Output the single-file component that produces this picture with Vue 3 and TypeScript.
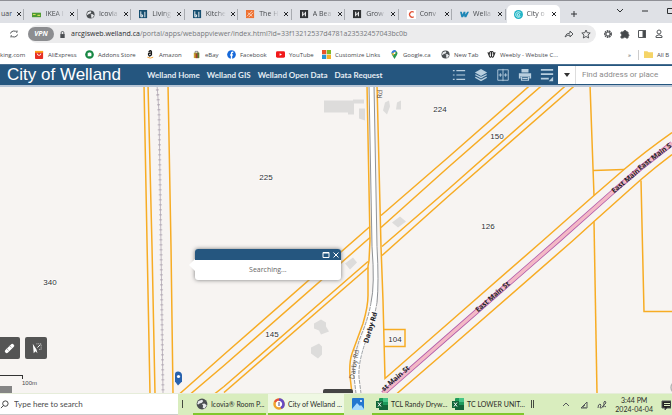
<script setup lang="ts">
interface Tab { title: string; icon: string; active?: boolean }
interface Bookmark { label: string; icon: string; width: number }
interface Label { text: string; x: number; y: number }

const tabs: Tab[] = [
  { title: 'uar', icon: 'none' },
  { title: 'IKEA I', icon: 'ikea' },
  { title: 'Icovia', icon: 'globe' },
  { title: 'Living', icon: 'bi' },
  { title: 'Kitche', icon: 'bi' },
  { title: 'The H', icon: 'depot' },
  { title: 'A Bea', icon: 'houzz' },
  { title: 'Grow', icon: 'houzz' },
  { title: 'Conv', icon: 'c' },
  { title: 'Wella', icon: 'w' },
  { title: 'City o', icon: 'city', active: true },
]

const bookmarks: Bookmark[] = [
  { label: 'king.com', icon: 'none', width: 35 },
  { label: 'AliExpress', icon: 'ali', width: 50 },
  { label: 'Addons Store', icon: 'addons', width: 61 },
  { label: 'Amazon', icon: 'amazon', width: 46 },
  { label: 'eBay', icon: 'ebay', width: 35 },
  { label: 'Facebook', icon: 'facebook', width: 49 },
  { label: 'YouTube', icon: 'youtube', width: 46 },
  { label: 'Customize Links', icon: 'windows', width: 68 },
  { label: 'Google.ca', icon: 'pin', width: 51 },
  { label: 'New Tab', icon: 'globe', width: 46 },
  { label: 'Weebly - Website C...', icon: 'weebly', width: 84 },
]

const links = ['Welland Home', 'Welland GIS', 'Welland Open Data', 'Data Request']
const tools = ['Legend', 'Layers', 'Swipe', 'Print', 'More']

const parcels: Label[] = [
  { text: '224', x: 440, y: 111 },
  { text: '225', x: 266, y: 179 },
  { text: '150', x: 497, y: 138 },
  { text: '126', x: 488, y: 228 },
  { text: '340', x: 50, y: 284 },
  { text: '145', x: 272, y: 336 },
  { text: '104', x: 395, y: 341 },
]

const parcelLines: string[] = [
  'M144 84L147 240L150 393',
  'M148 84L152 246L155 393',
  'M168 84L171 246L173 393',
  'M531 84L448 157L381 215',
  'M370 226L224 354L180 393',
  'M543 84L448 167L381 227',
  'M370 237L224 365L191 393',
  'M567 84L448 189L382 246',
  'M368 261L224 386L215 393',
  'M576 84L448 196L382 255',
  'M368 267L224 392',
  'M367 84L370 240L369 260L368 266L368 295Q368 306 363 323L352 353Q349 362 350 376L352 393',
  'M377 84L381 246L383 300L385 378L448 323L543 240L594 195L624 169Q645 151 672 132',
  'M397 393L448 349L573 240L594 221L641 179Q656 166 672 154',
  'M590 84L594 195M593 170L624 169',
  'M594 221L597 393',
  'M641 180L644 311H672',
  'M384 329H405V346H384',
]
</script>

<template>
  <div class="screen">
    <svg class="defs" aria-hidden="true">
      <symbol id="i-none" viewBox="0 0 10 10" />
      <symbol id="i-ikea" viewBox="0 0 10 10"><path fill="#4d9a32" d="M0 3h10v5H0z" /><path stroke="#d3df59" stroke-width="1.3" d="M1 5h3M6 6h3" /></symbol>
      <symbol id="i-globe" viewBox="0 0 10 10"><circle cx="5" cy="5" r="4.5" fill="#4b4f52" /><path fill="#e8eaed" d="M2 2.500l3-1 1 1-1 1.500-2 .5-1 1-1-.5zM5 5l2-.5L9 6 7 9 5.500 8 6 6.500z" /></symbol>
      <symbol id="i-bi" viewBox="0 0 10 10"><path fill="#174f70" d="M0 0h9v9H0z" /><path fill="none" stroke="#fff" d="M2 1.500v6h2v-2H2M6.500 2v6" /></symbol>
      <symbol id="i-depot" viewBox="0 0 10 10"><path fill="#ee7030" d="M0 0h9v9H0z" /><path stroke="#fff" stroke-width=".7" d="M1 7l6-6M3 8l5-5M2 3l5 4" /></symbol>
      <symbol id="i-houzz" viewBox="0 0 10 10"><path fill="#303235" d="M0 0h9v9H0z" /><path fill="none" stroke="#fff" stroke-width="1.100" d="M3 7V2M6 2v5M3 5l3-1" /></symbol>
      <symbol id="i-c" viewBox="0 0 10 10"><path fill="#fff" d="M0 0h10v10H0z" /><path fill="none" stroke="#e15337" stroke-width="1.400" d="M7.500 2.500a3 3 0 1 0 0 5" /></symbol>
      <symbol id="i-w" viewBox="0 0 10 10"><path fill="#1d86b6" d="M0 2h2l1 3 1-3h2v3l2-3h2L7 8H5L4.500 6 3.500 8h-2z" /></symbol>
      <symbol id="i-city" viewBox="0 0 10 10"><circle cx="5" cy="5" r="5" fill="#20b3c6" /><path fill="none" stroke="#d9f8f7" d="M7.500 3.500a3 3 0 1 0 0 3M4 5c0-2 3-1 2 1S3 6 4 4" /></symbol>
      <symbol id="i-ali" viewBox="0 0 10 10"><rect y="1" width="9" height="9" rx="1" fill="#e62e24" /><path fill="#ffa21b" d="M0 1h9v2H0z" /><path fill="none" stroke="#fff" d="M2.500 4a2 2 0 0 0 4 0" /></symbol>
      <symbol id="i-addons" viewBox="0 0 10 10"><circle cx="5" cy="5" r="4.800" fill="#178743" /><path fill="#fff" d="M3 3h1.500a1 1 0 0 1 1.500 0h1v1.500a1 1 0 0 1 0 1.500v1H3z" /></symbol>
      <symbol id="i-amazon" viewBox="0 0 10 10"><path fill="none" stroke="#171717" stroke-width="1.500" d="M3 2.500Q5-.5 6 2v4M6 3.500Q2 3 3 5.500T6 5" /><path fill="none" stroke="#f39b22" d="M1.500 8Q5 10 8 8" /></symbol>
      <symbol id="i-ebay" viewBox="0 0 10 10"><path fill="#c8a22a" d="M2 3h6v6H2z" /><path fill="#5b7d33" d="M5 3h3v6H5z" /><path fill="#a43b30" d="M4 4h2v5H4z" /><path fill="none" stroke="#555" stroke-width=".7" d="M3.500 4V1.500h3V4" /></symbol>
      <symbol id="i-facebook" viewBox="0 0 10 10"><circle cx="5" cy="5" r="4.800" fill="#1769d9" /><path fill="none" stroke="#fff" stroke-width="1.500" d="M7 2.500H6Q5 2.500 5 4v6M3.500 5.500h3" /></symbol>
      <symbol id="i-youtube" viewBox="0 0 10 10"><rect y="1.500" width="10" height="7" rx="1.500" fill="#f1191a" /><path fill="#fff" d="M4 3.500v3L6.700 5z" /></symbol>
      <symbol id="i-windows" viewBox="0 0 10 10"><path fill="#e8532b" d="M0 0h4.700v4.700H0z" /><path fill="#7db928" d="M5.300 0H10v4.700H5.300z" /><path fill="#2796d4" d="M0 5.300h4.700V10H0z" /><path fill="#f3b329" d="M5.300 5.300H10V10H5.300z" /></symbol>
      <symbol id="i-pin" viewBox="0 0 10 10"><path fill="#2c9a54" d="M5 10L2.300 5.500A3.200 3.200 0 1 1 7.700 5.500z" /><path fill="#3b7de0" d="M2 4a3 3 0 0 1 5-3L4 4z" /><path fill="#efb83a" d="M2 4l1.500 2.500L7 2z" /><circle cx="5" cy="3.500" r="1" fill="#fff" /></symbol>
      <symbol id="i-weebly" viewBox="0 0 10 10"><path fill="none" stroke="#292929" stroke-width="1.200" d="M1 2.500l2 5Q4 9 5 6.500V3Q5 1 3.500 2M5 3Q5 1 6.500 2M5 6.500Q6 9 7 7.500l2-5M3 2v3M7 2v3" /></symbol>
      <symbol id="i-excel" viewBox="0 0 12 12"><rect x="3" width="9" height="12" rx="1" fill="#1d9a5a" /><path fill="#47c488" d="M7 0h5v4H7z" /><path fill="#13663a" d="M3 7h9v5H3zM0 3h7v7H0z" /><path stroke="#fff" d="M2 4.500l3 4M5 4.500l-3 4" /></symbol>
    </svg>

    <nav class="tab-strip" aria-label="Browser tabs">
      <div class="tabs">
        <div v-for="tab in tabs" :key="tab.title" class="tab" :class="{ active: tab.active, partial: tab.icon === 'none' }">
          <svg class="favicon" viewBox="0 0 10 10"><use :href="'#i-' + tab.icon" /></svg>
          <span class="tab-title">{{ tab.title }}</span>
          <button class="tab-close" :aria-label="'Close ' + tab.title"><svg viewBox="0 0 6 6"><path d="M1 1l4 4M5 1L1 5" /></svg></button>
        </div>
      </div>
      <button class="new-tab" aria-label="New tab"><svg viewBox="0 0 8 8"><path d="M4 1v6M1 4h6" /></svg></button>
      <div class="window-controls">
        <button aria-label="Search tabs"><svg viewBox="0 0 8 8"><path d="M1 2l3 3 3-3" /></svg></button>
        <button aria-label="Minimize"><svg viewBox="0 0 8 8"><path d="M1 4h6" /></svg></button>
        <button aria-label="Maximize"><svg viewBox="0 0 8 8"><path d="M1.500 1.500h6v5h-6z" /></svg></button>
      </div>
    </nav>

    <div class="address-row">
      <button class="reload" aria-label="Reload"><svg viewBox="0 0 10 10"><path d="M1.500 4.500a3.500 3 0 0 1 6.500-1V1.500M8.500 5.500a3.500 3 0 0 1-6.500 1v2" /></svg></button>
      <div class="omnibox">
        <span class="vpn">VPN</span>
        <svg class="lock" viewBox="0 0 8 8"><path fill="#4b4e52" d="M1.500 3.500h5V8h-5z" /><path fill="none" stroke="#4b4e52" d="M2.500 4V2a1.500 1.500 0 0 1 3 0v2" /></svg>
        <p class="url"><b>arcgisweb.welland.ca</b>/portal/apps/webappviewer/index.html?id=33f13212537d4781a23532457043bc0b</p>
        <button aria-label="Share"><svg viewBox="0 0 10 10"><path d="M1 8Q2 4 6 4V2l3 3-3 3V6Q3 6 1 8z" /></svg></button>
        <button aria-label="Bookmark"><svg viewBox="0 0 10 10"><path d="M5 1l1.200 2.700 3 .3L7 6l.7 3L5 7.500 2.300 9 3 6 .8 4l3-.3z" /></svg></button>
      </div>
      <div class="extensions">
        <button aria-label="Settings"><svg viewBox="0 0 10 10"><circle cx="5" cy="5" r="3" stroke-width="2" stroke-dasharray="1.500 .6" /><circle cx="5" cy="5" r="2" /></svg></button>
        <button aria-label="Extensions"><svg viewBox="0 0 10 10"><path fill="#45484b" d="M1 3h2.500a1.500 1.500 0 0 1 3 0H8v2a1.300 1.300 0 0 1 0 2.500V9H6a1.300 1.300 0 0 0-2.500 0H1V7a1 1 0 0 0 0-2z" /></svg></button>
        <button aria-label="Side panel"><svg viewBox="0 0 10 10"><path d="M1.500 1.500h7v7h-7z" /><path fill="#45484b" d="M6 1.500h2.500v7H6z" /></svg></button>
        <button aria-label="Profile"><svg viewBox="0 0 10 10"><circle cx="5" cy="3" r="2" /><path d="M2 8.500V7Q5 4.500 8 7v1.500z" /></svg></button>
      </div>
    </div>

    <nav class="bookmarks" aria-label="Bookmarks">
      <a v-for="b in bookmarks" :key="b.label" href="#" :style="{ width: b.width + 'px' }"><svg v-if="b.icon !== 'none'" viewBox="0 0 10 10"><use :href="'#i-' + b.icon" /></svg>{{ b.label }}</a>
      <div class="bookmarks-end">
        <button aria-label="More bookmarks">»</button>
        <a class="all" href="#"><svg viewBox="0 0 8 8"><path fill="#f5d467" d="M0 1h3l1 1h4v5H0z" /></svg>All B</a>
      </div>
    </nav>

    <header class="app-header">
      <h1>City of Welland</h1>
      <nav class="app-links" aria-label="City sites"><a v-for="l in links" :key="l" href="#">{{ l }}</a></nav>
      <div class="tools">
        <button v-for="tool in tools" :key="tool" :aria-label="tool">
          <svg viewBox="0 0 16 16">
            <path v-if="tool === 'Legend'" fill="none" stroke="currentColor" stroke-width="1.400" d="M1 3h2M5 3h10M1 8h2M5 8h10M1 13h2M5 13h10" />
            <g v-else-if="tool === 'Layers'" fill="currentColor"><path d="M8 1l7 4-7 4-7-4z" /><path d="M2 7l6 3 6-3 1 1-7 4-7-4zM2 10l6 3 6-3 1 1-7 4-7-4z" /></g>
            <g v-else-if="tool === 'Swipe'" fill="none" stroke="currentColor"><path d="M2 2h12v12H2zM8 1v14M3 8h4M9 8h4M5 6v4M11 6v4" /></g>
            <g v-else-if="tool === 'Print'"><path fill="currentColor" d="M4 1h8v4H4zM1 6h14v6h-2V9H3v3H1z" /><path fill="none" stroke="currentColor" stroke-width="1.300" d="M4 10h8v4H4zM5 12h6" /></g>
            <g v-else><path stroke="currentColor" stroke-width="2" d="M1 2h14M1 7h14M1 12h9" /><path fill="currentColor" d="M15 10v5h-5z" /></g>
          </svg>
        </button>
      </div>
      <form class="search" @submit.prevent>
        <button type="button" aria-label="Search source"><svg viewBox="0 0 8 6"><path fill="#333" d="M1 1h6L4 5z" /></svg></button>
        <input type="text" aria-label="Find address or place" placeholder="Find address or place">
      </form>
    </header>

    <main class="map">
      <svg class="canvas" viewBox="0 84 672 309" preserveAspectRatio="xMidYMid slice" role="img" aria-label="Parcel map">
        <g fill="#dddcdb">
          <path d="M324 100h29v-1l11 0v4h-10v11h-6v-2h-24zM359 108h6v12l-6-2zM385 102l4-2 1 6-3 8-4-4zM397 102l4-2v9h-5zM392 222l8-6 6 5-8 6zM345 263l8-6 4 5-7 7zM402 84h9v2h-9zM314 323l7-4 5 3v4l3 5-8 3-2-4-5-2zM311 347l8-4 3 3v8l-4 4-7-5z" />
        </g>
        <g fill="none">
          <path stroke="#fff" stroke-width="5" d="M371 84L375 246Q377 285 374 302T364 340Q355 367 357 380L359 393" />
          <path stroke="#73777c" stroke-width=".8" d="M369 84L372 246Q375 285 371 302" />
          <path stroke="#73777c" stroke-width=".8" d="M374 84L377 246Q379 282 377 302" />
          <path stroke="#73777c" stroke-width=".7" stroke-dasharray="4 1" d="M371 302Q369 316 361 335Q352 359 354 376L356 393M377 302Q374 320 366 340Q358 362 359 377L361 393" />
          <path stroke="#a79dab" stroke-width=".7" d="M157 84L159 112L161 246L163 393" />
          <path stroke="#a79dab" stroke-width="3" stroke-dasharray=".8 4.200" d="M157 84L159 112L161 246L163 393" />
          <path stroke="#b25ba8" stroke-width="5" d="M383 393L448 336L558 240L611 193L640 168L672 143" />
          <path stroke="#f3b8c6" stroke-width="3.500" d="M383 393L448 336L558 240L611 193L640 168L672 143" />
          <g stroke="#f7ac24" stroke-width="1.500"><path v-for="line in parcelLines" :key="line" :d="line" /></g>
          <circle cx="677" cy="387" r="6" stroke="#b5b5b5" stroke-width="1.500" />
        </g>
        <g class="parcel-labels"><text v-for="p in parcels" :key="p.text" :x="p.x" :y="p.y">{{ p.text }}</text></g>
        <g class="street-labels">
          <text transform="translate(478 312) rotate(-41)">East Main St</text>
          <text transform="translate(614 193) rotate(-40)">East Main</text>
          <text transform="translate(640 170) rotate(-37)">East Main S</text>
          <text transform="translate(384 391) rotate(-41)">st Main St</text>
          <text transform="translate(368 343) rotate(-73)">Darby Rd</text>
          <text class="light" transform="translate(354 379) rotate(-80)">Darby Rd</text>
          <text class="light" transform="translate(382 98) rotate(-88)">Rd</text>
        </g>
        <path fill="#2862ae" d="M178 385l-3-4v-7q0-3 3-3t4 3v7z" /><circle cx="178.500" cy="376" r="1.600" fill="#fff" />
      </svg>

      <section class="popup" aria-label="Search status">
        <div class="popup-bar">
          <button aria-label="Maximize popup"><svg viewBox="0 0 8 8"><path d="M1 1.500h6v5H1zM1 2h6" /></svg></button>
          <button aria-label="Close popup"><svg viewBox="0 0 8 8"><path d="M1.500 1.500l5 5M6.500 1.500l-5 5" /></svg></button>
        </div>
        <p>Searching...</p>
      </section>

      <div class="map-tools">
        <button aria-label="Measure"><svg viewBox="0 0 14 14"><path stroke="#fff" stroke-width="4" stroke-linecap="round" d="M4 10l6-6" /><path stroke="#999" d="M4 7l2 2M7 4l2 2" /></svg></button>
        <button aria-label="Select"><svg viewBox="0 0 14 14"><path fill="#fff" d="M3 2l4 6 1 4-2-2-2 2z" /><path fill="none" stroke="#ddd" stroke-dasharray="1 1" d="M7 2h5v6H9" /><path stroke="#fff" d="M8 6l3-3" /></svg></button>
      </div>
      <div class="scale"><span class="bar"></span><span class="scale-text">100m</span></div>
      <div class="coords"></div>
      <button class="drawer" aria-label="Open attribute table"></button>
    </main>

    <footer class="taskbar">
      <label class="task-search">
        <svg viewBox="0 0 10 10"><circle cx="6" cy="4" r="3" /><path d="M4 6L1 9" /></svg>
        <input type="text" aria-label="Type here to search" placeholder="Type here to search">
      </label>
      <span class="grip first"></span>
      <button class="task icovia"><svg viewBox="0 0 10 10"><use href="#i-globe" /></svg><span>Icovia® Room P...</span></button>
      <button class="task city"><svg viewBox="0 0 12 12"><circle cx="6" cy="6" r="4.500" fill="#fff" stroke="#f0a32c" stroke-width="2.500" /><path fill="none" stroke="#664bc4" stroke-width="2.500" d="M6 1.500a4.500 4.500 0 0 1 2 8.500" /><path fill="none" stroke="#e44e45" stroke-width="2" d="M2 4a4.500 4.500 0 0 1 4-2.500" /><path stroke="#4a4280" d="M6 4v4" /></svg><span>City of Welland ...</span></button>
      <button class="task photos" aria-label="Photos"><svg viewBox="0 0 12 12"><rect width="12" height="12" rx="1" fill="#2377cf" /><path fill="#a7dbff" d="M0 11l5-6 3 3 1-1 3 4v1H0z" /><circle cx="9" cy="3" r="1" fill="#fff" /></svg></button>
      <button class="task excel"><svg viewBox="0 0 12 12"><use href="#i-excel" /></svg><span>TCL Randy Dryw...</span></button>
      <button class="task excel"><svg viewBox="0 0 12 12"><use href="#i-excel" /></svg><span>TC LOWER UNIT...</span></button>
      <span class="grip"></span>
      <div class="tray">
        <button aria-label="Show hidden icons"><svg viewBox="0 0 10 10"><path d="M2 6l3-3 3 3" /></svg></button>
        <button aria-label="Network"><svg viewBox="0 0 10 10"><path d="M2 8L8 2v6zM4 8q0-2 2-3M6 8V7" /></svg></button>
        <button aria-label="Pen"><svg viewBox="0 0 10 10"><path d="M1 8q0-4 2-4t0 4q4 0 4-6l1-1 1 2-4 4M6 7q2-2 3 0" /></svg></button>
        <time datetime="2024-04-04T15:44">3:44 PM<br>2024-04-04</time>
        <button aria-label="Notifications"><svg viewBox="0 0 10 10"><path fill="#222" d="M1 1h9v7H6L4 10V8H1z" /><path stroke="#dff0c7" d="M3 3.500h6M3 5.500h6" /></svg></button>
      </div>
    </footer>
  </div>
</template>

<style>
html, body { margin: 0; height: 100%; overflow: hidden; }
</style>

<style scoped>
* { box-sizing: border-box; }
.screen { height: 100vh; min-height: 240px; display: grid; grid-template-columns: minmax(0, 1fr); grid-template-rows: 23px 22px 19px 21px minmax(0, 1fr) 22px; font-family: "Open Sans", "Noto Sans", sans-serif; font-size: 7px; line-height: 10px; color: #46494d; overflow: hidden; background: #fff; }
.defs { position: absolute; width: 0; height: 0; }
button { padding: 0; border: 0; background: transparent; font: inherit; color: inherit; display: inline-flex; align-items: center; justify-content: center; }
button svg { width: 10px; height: 10px; fill: none; stroke: #55585b; stroke-width: 1; }
a { color: inherit; text-decoration: none; white-space: nowrap; }
p { margin: 0; }
input { font: inherit; color: inherit; border: 0; outline: 0; padding: 0; min-width: 0; background: transparent; }

.tab-strip { display: flex; background: #dfe1e6; border-top: 1px solid #8f9096; padding-top: 4px; }
.tabs { width: calc(83.333vw + 28px); margin-left: -28px; display: grid; grid-template-columns: repeat(11, minmax(0, 1fr)); flex: none; }
.tab { display: grid; grid-template-columns: 10px 20px 8px; column-gap: 3px; align-items: center; padding-left: 7px; border-right: 1px solid transparent; position: relative; }
.tab:not(.active)::after { content: ""; position: absolute; right: 0; top: 4px; height: 11px; border-right: 1px solid #a8abb0; }
.tab.active { background: #fff; border-radius: 5px 5px 0 0; }
.favicon { width: 9px; height: 9px; }
.tab-title { overflow: hidden; white-space: nowrap; mask-image: linear-gradient(90deg, #000 50%, transparent); }
.partial .tab-title { text-align: right; mask-image: none; }
.tab-close svg { width: 6px; height: 6px; stroke: #25272a; }
.new-tab { width: 28px; }
.new-tab svg { stroke: #303236; width: 8px; height: 8px; }
.window-controls { margin-left: auto; display: flex; gap: 17px; margin-right: -2px; }
.window-controls button { width: 8px; height: 12px; }
.window-controls svg { width: 8px; height: 8px; flex: none; stroke: #2d2f31; }

.address-row { display: flex; align-items: center; background: #fff; padding: 0 8px 0 9px; }
.reload { width: 10px; }
.omnibox { flex: 1; min-width: 0; height: 18px; margin-left: 9px; border-radius: 9px; background: #ececed; display: flex; align-items: center; gap: 5px; padding-right: 5px; }
.omnibox button + button { margin-left: 2px; }
.vpn { width: 26px; height: 14px; border-radius: 7px; background: #8c8d90; color: #fff; font-weight: 700; font-style: italic; line-height: 13px; text-align: center; flex: none; }
.lock { width: 7px; height: 7px; flex: none; }
.url { flex: 1; min-width: 0; overflow: hidden; white-space: nowrap; color: #75787c; }
.url b { font-weight: 400; color: #292b2e; }
.extensions { display: flex; gap: 7px; margin-left: 7px; }

.bookmarks { display: flex; align-items: center; background: #fff; overflow: hidden; font-size: 6px; }
.bookmarks a { display: flex; align-items: center; gap: 4px; flex: none; }
.bookmarks svg { width: 9px; height: 9px; flex: none; }
.bookmarks-end { margin-left: auto; display: flex; align-items: center; gap: 7px; width: 44px; flex: none; }
.bookmarks .all { border-left: 1px solid #ccc; padding-left: 5px; }

.app-header { background: #25567f; display: flex; align-items: center; color: #fff; min-width: 0; border-top: 1px solid #496f91; }
h1 { margin: 0 0 0 7px; width: 140px; font: 400 17px/20px "Liberation Sans", Arial, sans-serif; white-space: nowrap; flex: none; }
.app-links { display: flex; gap: 7px; font: 700 8px/10px Lato, "Open Sans", sans-serif; color: #e4ecf3; }
.tools { margin-left: auto; display: flex; gap: 8px; color: #b9cfdf; }
.tools svg { width: 14px; height: 14px; stroke: none; }
.search { width: 114px; height: 18px; flex: none; display: flex; margin-left: 4px; background: #fff; color: #777; font-family: Roboto, Arial, sans-serif; font-size: 8px; }
.search button { width: 18px; border-right: 1px solid #ddd; flex: none; }
.search button svg { width: 8px; height: 6px; stroke: none; }
.search input { flex: 1; padding-left: 6px; }
.search input::placeholder { color: #8b8b8b; opacity: 1; }

.map { position: relative; min-height: 0; overflow: hidden; background: #f7f4f2; }
.map::before { content: ""; position: absolute; inset: 0 0 auto; height: 2px; background: #b9c6d6; z-index: 1; }
.canvas { position: absolute; inset: 0; width: 100%; height: 100%; }
.parcel-labels { font: 8px "Liberation Sans", Arial, sans-serif; text-anchor: middle; fill: #2d2e30; stroke: #fff; stroke-width: 1px; paint-order: stroke; }
.street-labels { font: 700 7px "Open Sans", sans-serif; fill: #252529; }
.street-labels .light { font-weight: 400; fill: #57524d; }
.popup { position: absolute; left: 29%; top: 164px; width: 146px; background: #fff; border-radius: 3px; box-shadow: 0 0 4px #777; }
.popup::before { content: ""; position: absolute; left: -6px; top: 10px; border: solid transparent; border-width: 6px 6px 6px 0; border-right-color: #fff; }
.popup-bar { height: 11px; background: #25567f; border-radius: 3px 3px 0 0; display: flex; justify-content: flex-end; gap: 2px; padding-right: 1px; }
.popup-bar svg { width: 8px; height: 8px; stroke: #fff; }
.popup p { font-size: 7px; line-height: 20px; text-align: center; color: #666; }
.map-tools { position: absolute; left: -2px; bottom: 34px; display: flex; gap: 5px; }
.map-tools button { width: 22px; height: 22px; border-radius: 2px; background: #545454; }
.map-tools svg { width: 13px; height: 13px; stroke: none; }
.scale { position: absolute; left: 0; bottom: 6px; width: 37px; display: flex; flex-direction: column; }
.bar { width: 23px; height: 4px; border: 1px solid #333; border-left: 0; border-bottom: 0; }
.scale-text { font: 6px/8px "Liberation Sans", Arial, sans-serif; text-align: right; }
.coords { position: absolute; left: 0; bottom: 0; width: 12px; height: 7px; background: #858585; }
.drawer { position: absolute; left: 48%; bottom: 0; width: 30px; height: 4px; border-radius: 2px 2px 0 0; background: #444; }

.taskbar { display: flex; background: #d9edbe; color: #292c27; min-width: 0; border-top: 1px solid #e6edda; }
.task-search { width: 178px; flex: 0 1 auto; display: flex; align-items: center; gap: 5px; background: #fff; border-bottom: 1px solid #ccc; }
.task-search svg { width: 9px; height: 9px; fill: none; stroke: #333; flex: none; }
.task-search input { font-family: Lato, "Open Sans", sans-serif; font-size: 8px; width: 150px; }
.task-search input::placeholder { color: #4c4c4c; opacity: 1; }
.grip { width: 3px; height: 8px; margin: 6px 0 0 7px; border: solid #454b40; border-width: 0 1px; flex: none; }
.grip.first { width: 1px; margin: 6px 0 0 4px; border-width: 0 0 0 1px; }
.task { gap: 3px; justify-content: flex-start; flex: none; border-bottom: 2px solid #80c72c; white-space: nowrap; font-family: Lato, "Open Sans", sans-serif; }
.task svg { width: 12px; height: 12px; stroke: none; flex: none; }
.icovia { width: 73px; margin-left: 10px; padding-left: 3px; }
.city { width: 76px; padding-left: 5px; background: #eff8e3; margin-left: 2px; }
.photos { width: 28px; justify-content: center; border-color: transparent; }
.excel { width: 76px; padding-left: 4px; }
.tray { margin-left: auto; display: flex; align-items: center; gap: 8px; padding-right: 1px; }
.tray time { font: 7px/9px Lato, "Open Sans", sans-serif; text-align: center; white-space: nowrap; }
</style>
